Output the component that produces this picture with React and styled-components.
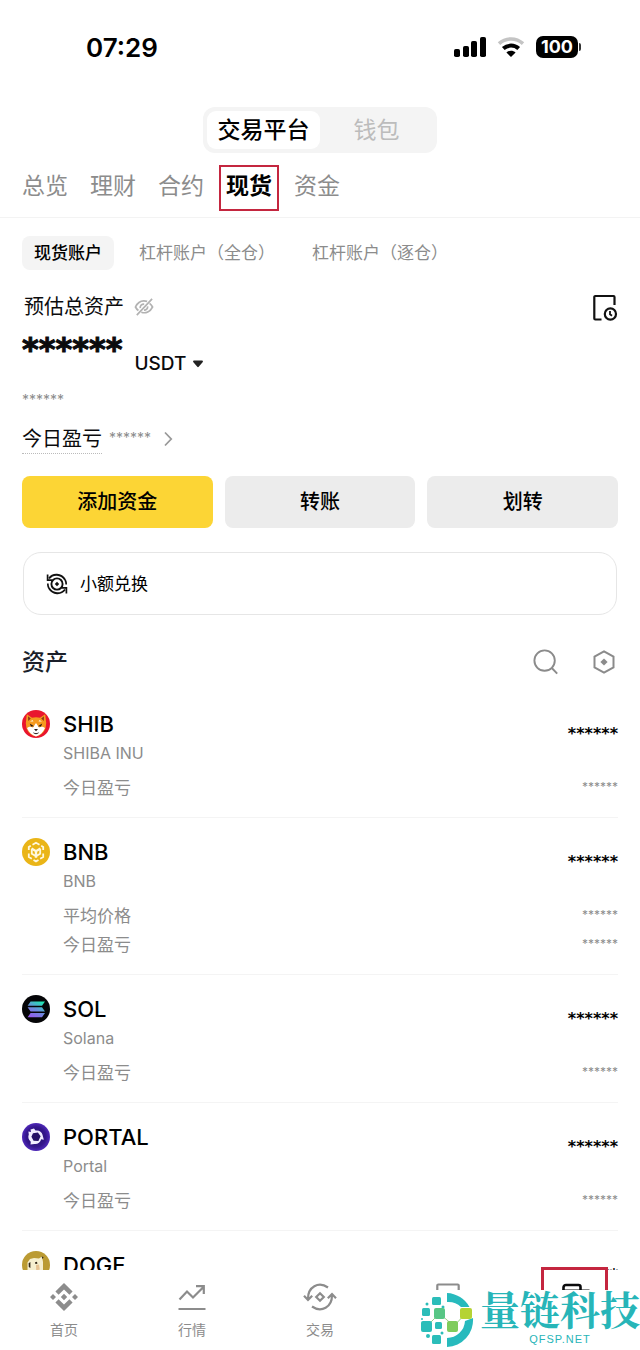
import React, { useState } from "react";
import styled, { createGlobalStyle } from "styled-components";

const GlobalStyle = createGlobalStyle`
	* { box-sizing: border-box; }
	body {
		margin: 0;
		background: #fff;
		color: #0b0b0d;
		font-family: Inter, "Noto Sans CJK SC", sans-serif;
	}
	button {
		border: 0;
		padding: 0;
		background: none;
		font: inherit;
		color: inherit;
		cursor: pointer;
	}
	ul, h1, h2, h3, p { margin: 0; padding: 0; font: inherit; }
	svg { display: block; flex: none; }
`;

const MASK = "******";

const accounts = ["现货账户", "杠杆账户（全仓）", "杠杆账户（逐仓）"];
const tabs = ["总览", "理财", "合约", "现货", "资金"];

/* ---------- icons ---------- */

const SignalIcon = () => (
	<svg width="32" height="20" viewBox="0 0 32 20">
		<rect x="0" y="12" width="6" height="8" rx="1.8" />
		<rect x="9" y="9" width="6" height="11" rx="1.8" />
		<rect x="17" y="4" width="6" height="16" rx="1.8" />
		<rect x="26" y="0" width="6" height="20" rx="1.8" />
	</svg>
);

const WifiIcon = () => (
	<svg width="28" height="20" viewBox="0 0 28 20">
		<path d="M2 6.6C8.8.4 19.200.4 26 6.600" fill="none" stroke="#c4c4c4" strokeWidth="3.600" />
		<path d="M6.300 11.600c4.400-4 11-4 15.400 0" fill="none" stroke="#000" strokeWidth="4" />
		<path d="M9.400 15.600c2.600-2.400 6.600-2.400 9.200 0L14 20z" />
	</svg>
);

const EyeOffIcon = () => (
	<svg width="20" height="18" viewBox="0 0 22 20" fill="none" stroke="#b2b2b2" strokeWidth="1.900">
		<path d="M14.500 3.800C8.800 2.200 4 4.800 1.500 10c.8 1.600 1.900 2.900 3.300 3.900M8 15.800c5 1.600 9.900-.6 12.500-5.800-.9-1.700-2-3-3.300-4" />
		<path d="M6.800 11.200c-.3-2.600 1.600-4.600 4.400-4.500M15 9.200c.3 2.500-1.600 4.300-4 4.200M20 1 3 19" />
	</svg>
);

const RecordIcon = () => (
	<svg width="26" height="28" viewBox="0 0 26 28" fill="none" stroke="#111" strokeWidth="2.200">
		<path d="M9.500 26.500H3.300a1 1 0 0 1-1-1V4a1 1 0 0 1 1-1h18.200a1 1 0 0 1 1 1v8" />
		<circle cx="18.400" cy="21" r="5.600" />
		<path d="M18 18v3.200l2 1.500" strokeWidth="1.800" />
	</svg>
);

const CaretIcon = () => (
	<svg width="10" height="8" viewBox="0 0 10 8">
		<path d="M1 .5h8c1 0 1.200 1 .6 1.700L5.700 6.800c-.4.5-1 .5-1.400 0L.4 2.200C-.2 1.500 0 .5 1 .5z" fill="#222" />
	</svg>
);

const ChevronIcon = () => (
	<svg width="10" height="16" viewBox="0 0 10 16" fill="none" stroke="#999" strokeWidth="1.800">
		<path d="M2 1.500 8.200 8 2 14.500" />
	</svg>
);

const ConvertIcon = () => (
	<svg width="22" height="22" viewBox="0 0 22 22" fill="none" stroke="#111" strokeWidth="1.900">
		<circle cx="11" cy="11" r="5.600" />
		<path d="M3 5.500C7 .2 15 .4 19.200 7M19 16.500C15 21.800 7 21.600 2.800 15" />
		<path d="M1.600 1.500v5.700h4.800M20.400 20.500v-5.700h-4.800M1.800 10.500c0 1.700.3 3.200 1 4.500M20.200 11.500c0-1.700-.3-3.200-1-4.500" strokeWidth="1.700" />
		<path d="M11 8.800 13.200 11 11 13.200 8.800 11z" fill="#111" stroke="none" />
	</svg>
);

const SearchIcon = () => (
	<svg width="26" height="26" viewBox="0 0 26 26" fill="none" stroke="#8b8b8b" strokeWidth="1.900">
		<circle cx="11.600" cy="11.600" r="10.200" />
		<path d="m18.800 19 5.400 5.600" />
	</svg>
);

const HexIcon = () => (
	<svg width="22" height="24" viewBox="0 0 22 24" fill="none" stroke="#8b8b8b" strokeWidth="2">
		<path d="M11 1.300 20.500 6.600v10.800L11 22.700l-9.500-5.300V6.600z" />
		<path d="M11 8.400 14.600 12 11 15.600 7.400 12z" fill="#8b8b8b" stroke="none" />
	</svg>
);

const HomeIcon = () => (
	<svg width="28" height="28" viewBox="0 0 28 28" fill="#8c8c8c">
		<path d="m14 0 8.600 8.600-3.200 3.200L14 6.400l-5.400 5.400-3.200-3.200zM14 28l-8.600-8.600 3.200-3.200 5.400 5.400 5.400-5.400 3.200 3.200zM14 10.800l3.200 3.200-3.200 3.200-3.200-3.200zM3 11l3 3-3 3-3-3zM25 11l3 3-3 3-3-3z" />
	</svg>
);

const MarketIcon = () => (
	<svg width="28" height="28" viewBox="0 0 28 28" fill="none" stroke="#8c8c8c" strokeWidth="2.200">
		<path d="m1.500 16.500 7.500-8 6 6L25.500 4M18 3.200h7.800V11M.5 26h27" />
	</svg>
);

const TradeIcon = () => (
	<svg width="34" height="28" viewBox="0 0 34 28" fill="none" stroke="#8c8c8c" strokeWidth="2.200">
		<path d="M25 4.500C15.500-2 4.800 4 5 16M1 12.800l4 4.200 4.200-4.200M9 23.500C18.500 30 29.200 24 29 12M24.800 15.200l4.200-4.200 4 4.200" />
		<path d="M17 10.200 20.800 14 17 17.800 13.200 14z" />
	</svg>
);

const ContractIcon = () => (
	<svg width="24" height="28" viewBox="0 0 24 28" fill="none" stroke="#8c8c8c" strokeWidth="2.200">
		<path d="M1.300 27V2.500a1 1 0 0 1 1-1h19.400a1 1 0 0 1 1 1V27z" />
	</svg>
);

const WalletIcon = () => (
	<svg width="28" height="28" viewBox="0 0 28 28" fill="none" stroke="#0b0b0d" strokeWidth="2.600">
		<path d="M1.500 8V4.500a2.500 2.500 0 0 1 2.500-2.500h12.500a2 2 0 0 1 2 2V7" />
		<path d="M1.500 7.500h25V25h-25z" strokeWidth="2" />
	</svg>
);

const ShibLogo = () => (
	<svg width="28" height="28" viewBox="0 0 28 28">
		<circle cx="14" cy="14" r="14" fill="#e9162e" />
		<path d="M4.800 4.200 10 7.800c2.500-.8 5.500-.8 8 0l5.200-3.600 1 8.800-.6 5c-1.500 4.500-5 7.500-9.600 8.500-4.600-1-8.100-4-9.600-8.500l-.6-5z" fill="#f59a1f" />
		<path d="M6 6.200 8.800 8.500 6.200 11zM22 6.200l-2.800 2.300 2.600 2.500z" fill="#8a3a1a" />
		<path d="M5 18c2.500-2 4.200-1.500 6-.5L14 13l3 4.500c1.800-1 3.500-1.500 6 .5-1.800 4.300-5 7.400-9 8.500-4-1.100-7.200-4.200-9-8.500z" fill="#fff" />
		<path d="m7.800 13.500 4.200 2.700-3 .3zM20.200 13.500 16 16.200l3 .3zM12 19h4l-2 2.200z" fill="#241815" />
		<path d="M11.500 22.800c1.500 1.200 3.500 1.200 5 0" fill="none" stroke="#241815" />
		<path d="M8 11.500 10.500 10l1 1.500zM20 11.500 17.500 10l-1 1.500z" fill="#fff4d8" />
	</svg>
);

const BnbLogo = () => (
	<svg width="28" height="28" viewBox="0 0 28 28">
		<circle cx="14" cy="14" r="14" fill="#eab517" />
		<g fill="none" stroke="#fff8df" strokeWidth="1.800">
			<path d="m10.500 6.800 3.500-2 3.500 2M6.800 12V9l2-1.200M21.200 12V9l-2-1.200M6.800 15.500V19l3 1.700M21.200 15.500V19l-3 1.700M11.500 22l2.500 1.400 2.500-1.400" />
			<path d="m9.500 10.500 4.500 2.700 4.500-2.700M14 13.200v6.500" strokeWidth="2.400" />
			<path d="M9.800 11v4.700l4.200 2.400 4.200-2.400V11" />
		</g>
	</svg>
);

const SolLogo = () => (
	<svg width="28" height="28" viewBox="0 0 28 28">
		<defs>
			<linearGradient id="sol" gradientUnits="userSpaceOnUse" x1="9" y1="23" x2="18" y2="6">
				<stop offset="0" stopColor="#9a55ee" />
				<stop offset=".5" stopColor="#6b8bdc" />
				<stop offset="1" stopColor="#1fe6b2" />
			</linearGradient>
		</defs>
		<circle cx="14" cy="14" r="14" fill="#050507" />
		<path d="M8.600 6.500H23l-3 4.200H5.600zM5.600 12.200H20l3 4.200H8.600zM8.600 18H23l-3 4.200H5.600z" fill="url(#sol)" />
	</svg>
);

const PortalLogo = () => (
	<svg width="28" height="28" viewBox="0 0 28 28">
		<defs>
			<radialGradient id="portal">
				<stop offset="0" stopColor="#251069" />
				<stop offset=".7" stopColor="#34168c" />
				<stop offset="1" stopColor="#4f28b8" />
			</radialGradient>
		</defs>
		<circle cx="14" cy="14" r="14" fill="url(#portal)" />
		<path d="M8.500 6.500 12 5.500l1.500 2c3.400-.6 6.300 1 7 4.300l1.300 5-2.600-.5c-.9 3.400-3.900 5.200-6.700 4.700L8.500 21.600l.3-2.900c-2.500-2-3-4.900-2-7.200l-.4-3 2.600.6z" fill="#f1edff" />
		<path d="m11 10.200 4.900-.8 2.700 3.900-2.200 4.600-4.800-.2-2.200-3.900z" fill="#241066" />
	</svg>
);

const DogeLogo = () => (
	<svg width="28" height="28" viewBox="0 0 28 28">
		<circle cx="14" cy="14" r="14" fill="#bb9b33" />
		<path d="M5.500 21v-9.500L8 8l4-1 5 .5 3-2 1 5.500v10l-8 4z" fill="#f6efcf" />
		<path d="M6.600 12.200 8.400 11v6l-1.600-1zM19.500 5.500l2.100.5-1 2zM13 11.200l2-.4.4 2-2 .2z" fill="#33291a" />
		<path d="m14 14 3-.5.8 5-3.600 1z" fill="#e6c393" />
	</svg>
);

const BrandMark = () => (
	<svg width="54" height="56" viewBox="0 0 54 56">
		<path d="M27 1a27 27 0 0 1 22.500 14H41a18 18 0 0 0-14-5zM27 46a18 18 0 0 0 18-17l8-3a27 27 0 0 1-26 29z" fill="#27babd" />
		<path d="m20 22 14 12L46 21M7 34l12-12" stroke="#9ccf88" fill="none" />
		<g fill="#2bbdb9">
			<rect x="12" y="5" width="9" height="8" rx="1.500" />
			<rect x="2" y="16" width="8" height="8" rx="1.500" />
			<rect x="1" y="29" width="11" height="11" rx="2" />
			<rect x="15" y="30" width="7" height="7" rx="1.500" />
			<rect x="12" y="43" width="9" height="9" rx="1.500" />
			<circle cx="7" cy="12" r="1.500" />
			<circle cx="2" cy="27" r="1" />
			<circle cx="8" cy="44" r="2" />
			<circle cx="23" cy="15" r="1.500" />
			<circle cx="22" cy="41" r="1.500" />
		</g>
		<rect x="14" y="16" width="11" height="11" rx="2" fill="#58c685" />
		<rect x="27" y="29" width="11" height="11" rx="2" fill="#7fcc5c" />
		<rect x="40" y="16" width="12" height="11" rx="2" fill="#b5d334" />
	</svg>
);

const assets = [
	{ symbol: "SHIB", name: "SHIBA INU", Logo: ShibLogo, lines: ["今日盈亏"] },
	{ symbol: "BNB", name: "BNB", Logo: BnbLogo, lines: ["平均价格", "今日盈亏"] },
	{ symbol: "SOL", name: "Solana", Logo: SolLogo, lines: ["今日盈亏"] },
	{ symbol: "PORTAL", name: "Portal", Logo: PortalLogo, lines: ["今日盈亏"] },
	{ symbol: "DOGE", Logo: DogeLogo, lines: [] },
];

const App = () => {
	const [tab, setTab] = useState("现货");
	const [account, setAccount] = useState(accounts[0]);

	return (
		<Screen>
			<GlobalStyle />
			<Content>
				<StatusBar>
					<Time>07:29</Time>
					<StatusIcons>
						<SignalIcon />
						<WifiIcon />
						<Battery>100</Battery>
					</StatusIcons>
				</StatusBar>

				<Segmented>
					<Segment $active>交易平台</Segment>
					<Segment>钱包</Segment>
				</Segmented>

				<Tabs>
					{tabs.map((t) => (
						<Tab key={t} $active={t === tab} onClick={() => setTab(t)}>{t}</Tab>
					))}
				</Tabs>

				<Body>
					<Chips>
						{accounts.map((a) => (
							<Chip key={a} $active={a === account} onClick={() => setAccount(a)}>{a}</Chip>
						))}
					</Chips>

					<TotalRow>
						<TotalLabel>预估总资产</TotalLabel>
						<button aria-label="显示资产"><EyeOffIcon /></button>
						<RecordButton aria-label="历史记录"><RecordIcon /></RecordButton>
					</TotalRow>
					<BalanceRow>
						<Balance>{MASK}</Balance>
						<Currency>USDT<CaretIcon /></Currency>
					</BalanceRow>
					<Converted>{MASK}</Converted>
					<ProfitRow>
						<ProfitLabel>今日盈亏</ProfitLabel>
						<ProfitValue>{MASK}</ProfitValue>
						<ChevronIcon />
					</ProfitRow>

					<Actions>
						<Action $primary>添加资金</Action>
						<Action>转账</Action>
						<Action>划转</Action>
					</Actions>

					<ConvertCard>
						<ConvertIcon />
						<ConvertLabel>小额兑换</ConvertLabel>
					</ConvertCard>

					<AssetsHeader>
						<AssetsTitle>资产</AssetsTitle>
						<button aria-label="搜索"><SearchIcon /></button>
						<button aria-label="设置"><HexIcon /></button>
					</AssetsHeader>

					<AssetList>
						{assets.map(({ symbol, name, Logo, lines }) => (
							<AssetItem key={symbol}>
								<LogoBox><Logo /></LogoBox>
								<AssetInfo>
									<AssetTop>
										<div>
											<Symbol>{symbol}</Symbol>
											{name && <Name>{name}</Name>}
										</div>
										<Amount>{MASK}</Amount>
									</AssetTop>
									{lines.map((line) => (
										<Line key={line}>
											<span>{line}</span>
											<LineValue>{MASK}</LineValue>
										</Line>
									))}
								</AssetInfo>
							</AssetItem>
						))}
					</AssetList>
				</Body>
			</Content>

			<Nav>
				<NavItem href="#home"><HomeIcon />首页</NavItem>
				<NavItem href="#market"><MarketIcon />行情</NavItem>
				<NavItem href="#trade"><TradeIcon />交易</NavItem>
				<NavItem href="#contract" aria-label="合约"><ContractIcon /></NavItem>
				<NavItem href="#wallet" aria-label="资产"><Highlight /><WalletIcon /></NavItem>
				<Brand>
					<BrandMark />
					<BrandText>
						<BrandName>量链科技</BrandName>
						<BrandUrl>QFSP.NET</BrandUrl>
					</BrandText>
				</Brand>
			</Nav>
		</Screen>
	);
};

const Screen = styled.div`
	height: 100vh;
	display: flex;
	flex-direction: column;
`;

const Content = styled.main`
	flex: 1;
	min-height: 0;
	overflow: hidden;
`;

const StatusBar = styled.div`
	display: flex;
	justify-content: space-between;
	align-items: center;
	height: 94px;
	padding: 0 62px 0 86px;
`;

const Time = styled.div`
	font-size: 26px;
	font-weight: 600;
	color: #000;
`;

const StatusIcons = styled.div`
	display: flex;
	align-items: center;
	gap: 11px;
`;

const Battery = styled.div`
	position: relative;
	width: 42px;
	height: 22px;
	border-radius: 7px;
	background: #000;
	color: #fff;
	font-size: 18px;
	font-weight: 700;
	line-height: 22px;
	text-align: center;
	&::after {
		content: "";
		position: absolute;
		right: -3px;
		top: 7px;
		width: 2px;
		height: 8px;
		border-radius: 0 2px 2px 0;
		background: #333;
	}
`;

const Segmented = styled.div`
	display: flex;
	width: fit-content;
	margin: 13px auto 0;
	padding: 4px;
	border-radius: 12px;
	background: #f4f4f4;
`;

const Segment = styled.button`
	width: 113px;
	height: 38px;
	padding-bottom: 4px;
	border-radius: 9px;
	font-size: 23px;
	font-weight: ${(p) => (p.$active ? 500 : 400)};
	color: ${(p) => (p.$active ? "#000" : "#bcbcbc")};
	background: ${(p) => (p.$active ? "#fff" : "none")};
`;

const Tabs = styled.nav`
	display: flex;
	gap: 22px;
	padding: 19px 22px 13px;
	border-bottom: 1px solid #f3f3f3;
`;

const Tab = styled.button`
	height: 32px;
	padding-bottom: 4px;
	font-size: 23px;
	line-height: 28px;
	font-weight: ${(p) => (p.$active ? 700 : 400)};
	color: ${(p) => (p.$active ? "#000" : "#8c8c8c")};
	outline: ${(p) => (p.$active ? "2px solid #c4263f" : "none")};
	outline-offset: 5px;
`;

const Body = styled.div`
	padding: 18px 22px 0;
`;

const Chips = styled.div`
	display: flex;
	gap: 13px;
`;

const Chip = styled.button`
	height: 34px;
	padding: 0 12px 4px;
	border-radius: 8px;
	font-size: 17px;
	font-weight: ${(p) => (p.$active ? 500 : 400)};
	color: ${(p) => (p.$active ? "#000" : "#8c8c8c")};
	background: ${(p) => (p.$active ? "#f4f4f4" : "none")};
`;

const TotalRow = styled.div`
	display: flex;
	align-items: center;
	gap: 10px;
	margin-top: 22px;
	padding-left: 2px;
`;

const TotalLabel = styled.h1`
	font-size: 20px;
	line-height: 30px;
`;

const RecordButton = styled.button`
	margin-left: auto;
`;

const BalanceRow = styled.div`
	display: flex;
	align-items: flex-end;
	gap: 12px;
	height: 54px;
`;

const Balance = styled.div`
	font-family: "DejaVu Sans", sans-serif;
	font-size: 32px;
	font-weight: 700;
	line-height: 54px;
	-webkit-text-stroke: 1px #0b0b0d;
`;

const Currency = styled.button`
	display: flex;
	align-items: center;
	gap: 7px;
	font-size: 19px;
	font-weight: 500;
	line-height: 24px;
`;

const Converted = styled.p`
	margin-top: 12px;
	font-size: 14px;
	line-height: 24px;
	color: #8c8c8c;
`;

const ProfitRow = styled.div`
	display: flex;
	align-items: center;
	gap: 7px;
	margin-top: 12px;
	height: 30px;
`;

const ProfitLabel = styled.span`
	font-size: 20px;
	line-height: 28px;
	border-bottom: 1px dotted #bbb;
`;

const ProfitValue = styled.span`
	margin-right: 5px;
	padding-bottom: 4px;
	font-size: 14px;
	color: #8c8c8c;
`;

const Actions = styled.div`
	display: grid;
	grid-template-columns: repeat(3, 1fr);
	gap: 12px;
	margin-top: 22px;
`;

const Action = styled.button`
	height: 52px;
	padding-bottom: 3px;
	border-radius: 8px;
	font-size: 20px;
	font-weight: 500;
	color: #000;
	background: ${(p) => (p.$primary ? "#fcd535" : "#ececec")};
`;

const ConvertCard = styled.button`
	display: flex;
	align-items: center;
	gap: 12px;
	width: calc(100% - 2px);
	height: 63px;
	margin: 24px 1px 0;
	padding: 0 22px;
	border: 1px solid #e6e6e6;
	border-radius: 18px;
	font-size: 17px;
	color: #000;
`;

const ConvertLabel = styled.span`
	padding-bottom: 3px;
`;

const AssetsHeader = styled.header`
	display: flex;
	align-items: center;
	gap: 34px;
	margin-top: 30px;
	padding-right: 3px;
`;

const AssetsTitle = styled.h2`
	margin-right: auto;
	font-size: 23px;
	font-weight: 500;
	line-height: 34px;
	color: #1b1f2a;
`;

const AssetList = styled.ul`
	margin-top: 11px;
	list-style: none;
`;

const AssetItem = styled.li`
	display: flex;
	gap: 13px;
	padding: 19px 0 14px;
	border-bottom: 1px solid #f4f4f4;
`;

const LogoBox = styled.div`
	padding-top: 1px;
`;

const AssetInfo = styled.div`
	flex: 1;
`;

const AssetTop = styled.div`
	display: flex;
	justify-content: space-between;
	align-items: flex-start;
	margin-bottom: 7px;
`;

const Symbol = styled.h3`
	font-size: 22px;
	font-weight: 500;
	line-height: 30px;
	color: #000;
`;

const Name = styled.p`
	font-size: 16px;
	line-height: 28px;
	color: #8c8c8c;
`;

const Amount = styled.span`
	font-family: "DejaVu Sans", sans-serif;
	font-size: 16px;
	font-weight: 700;
	line-height: 50px;
	color: #000;
`;

const Line = styled.div`
	display: flex;
	justify-content: space-between;
	font-size: 17px;
	line-height: 29px;
	color: #8c8c8c;
`;

const LineValue = styled.span`
	font-size: 12px;
	line-height: 25px;
`;

const Nav = styled.nav`
	position: relative;
	display: grid;
	grid-template-columns: repeat(5, 1fr);
	height: 80px;
	background: #fff;
`;

const NavItem = styled.a`
	position: relative;
	display: flex;
	flex-direction: column;
	align-items: center;
	gap: 8px;
	padding-top: 13px;
	font-size: 14px;
	line-height: 22px;
	color: #8c8c8c;
	text-decoration: none;
`;

const Highlight = styled.span`
	position: absolute;
	top: -3px;
	left: 50%;
	width: 67px;
	height: 67px;
	margin-left: -35px;
	border: 3px solid #c4263f;
`;

/* watermark over the right end of the bar */
const Brand = styled.div`
	position: absolute;
	right: 0;
	bottom: 0;
	display: flex;
	align-items: center;
	gap: 6px;
	width: 220px;
	height: 60px;
	background: #fff;
	color: #27b5b8;
	white-space: nowrap;
`;

const BrandText = styled.div`
	padding-bottom: 4px;
	text-align: center;
`;

const BrandName = styled.div`
	font-size: 40px;
	line-height: 42px;
	font-weight: 700;
	font-family: "Liberation Serif", "Noto Serif CJK SC", "Noto Sans CJK SC", serif;
`;

const BrandUrl = styled.div`
	font-family: "Liberation Sans", sans-serif;
	font-size: 11px;
	line-height: 12px;
	letter-spacing: 1px;
`;

export default App;
